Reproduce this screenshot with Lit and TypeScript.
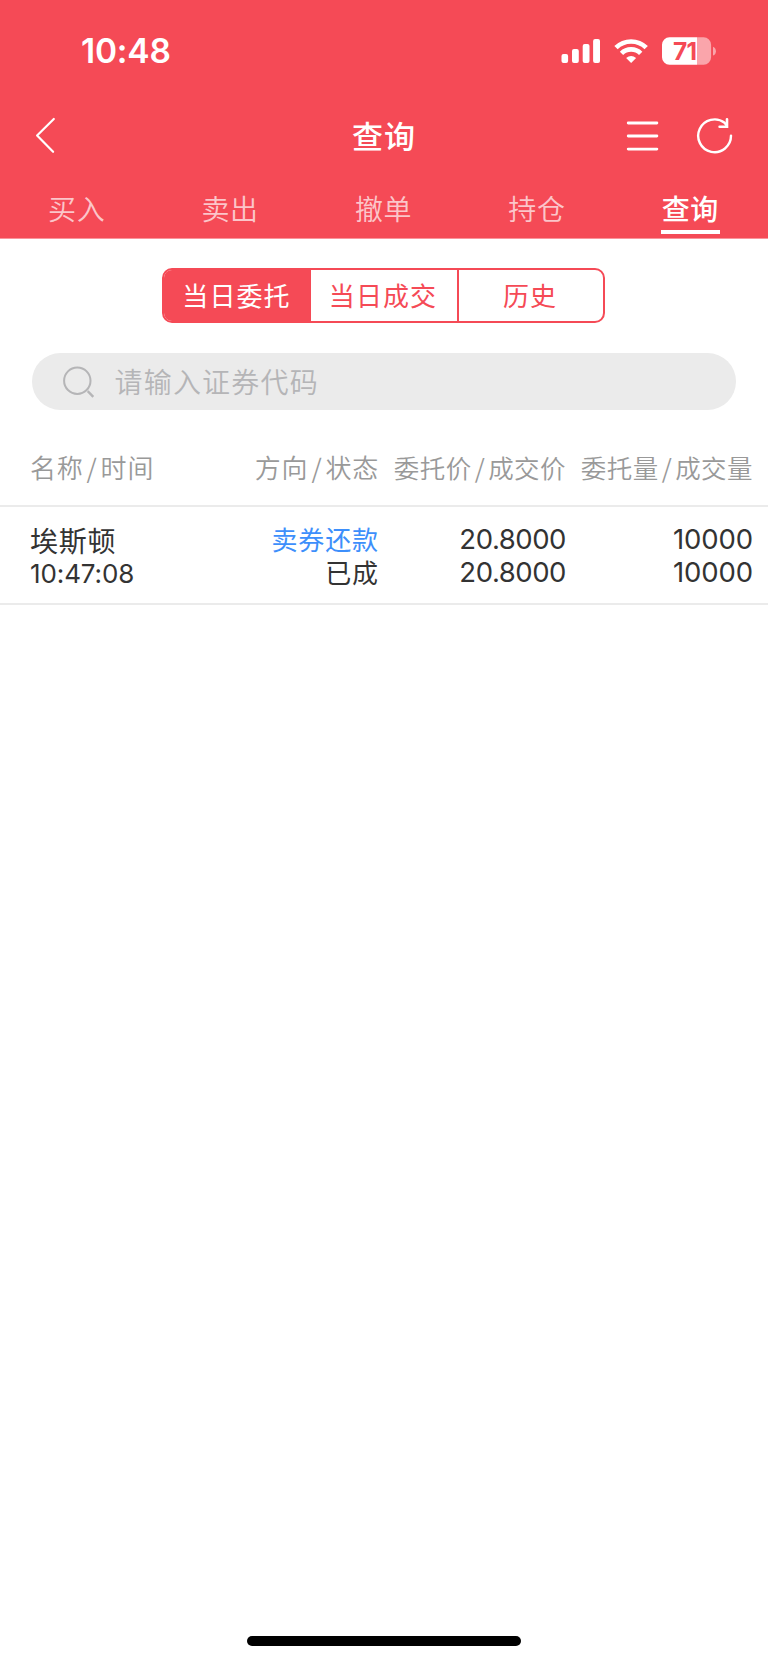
import { LitElement, html, css } from "lit";
import { customElement, property, state } from "lit/decorators.js";
import { classMap } from "lit/directives/class-map.js";

@customElement("status-bar")
class StatusBar extends LitElement {
  static styles = css`
    :host { display: flex; align-items: center; height: 102px; color: #fff; }
    .clock { font: 600 33.5px/40px Inter, sans-serif; letter-spacing: -0.2px; padding-left: 81px; flex: 1; }
    svg { display: block; width: 160px; height: 32px; margin-right: 48px; }
    .level { font: 700 24.5px Inter, sans-serif; letter-spacing: -0.8px; }
  `;
  render() {
    return html`
      <div class="clock">10:48</div>
      <svg viewBox="560 35 160 32" fill="#fff">
        <rect x="561.5" y="54" width="6.6" height="9" rx="2" />
        <rect x="572" y="49" width="6.8" height="14" rx="2" />
        <rect x="582.7" y="44" width="6.8" height="19" rx="2" />
        <rect x="593.1" y="39" width="6.9" height="24" rx="2" />
        <g fill="none" stroke="#fff" stroke-width="4.7">
          <path d="M616 47.7a21.5 21.5 0 0 1 30.2 0" />
          <path d="M621.5 53.4a13.6 13.6 0 0 1 19.2 0" />
        </g>
        <path d="M631.1 63l-5-5.1q5-4 10 0z" />
        <path d="M669.5 37.2h27.5v27.6h-27.5a7.5 7.5 0 0 1-7.5-7.5v-12.6a7.5 7.5 0 0 1 7.5-7.5z" />
        <path opacity=".5" d="M697 37.2h6.6a7.5 7.5 0 0 1 7.5 7.5v12.6a7.5 7.5 0 0 1-7.5 7.5h-6.6z" />
        <path opacity=".5" d="M713 46.8q2.9 1.3 2.9 4.4t-2.9 4.4z" />
        <text class="level" x="673" y="60" fill="#f54a56">71</text>
      </svg>
    `;
  }
}

@customElement("nav-bar")
class NavBar extends LitElement {
  @property() heading = "";
  static styles = css`
    :host { display: grid; grid-template-columns: 1fr auto 1fr; align-items: center; height: 68px; color: #fff; }
    .title { font: 500 31px/40px "Noto Sans CJK SC", sans-serif; letter-spacing: 1px; padding-bottom: 2px; }
    svg { display: block; fill: none; stroke: #fff; stroke-width: 2.8; stroke-linecap: round; stroke-linejoin: round; }
    .actions { display: flex; justify-content: flex-end; gap: 36px; padding-right: 34px; }
    .back { padding-left: 34px; }
  `;
  render() {
    return html`
      <div class="back"><svg width="24" height="38" viewBox="34 117 24 38"><path stroke-width="2.2" d="M53.8 119L37.1 135.5L53.1 151.8" /></svg></div>
      <div class="title">${this.heading}</div>
      <div class="actions">
        <svg width="34" height="38" viewBox="625 117 34 38"><path d="M628.2 123h28.7M628.2 136h28.7M628.2 149.1h28.7" /></svg>
        <svg width="39" height="38" viewBox="695 117 39 38">
          <path stroke-width="2.4" d="M731 135.6A16.4 16.4 0 1 1 724.6 122.8L726.6 125.5" />
          <path stroke-width="2.6" stroke-linejoin="miter" d="M727 119.3V126.7H719.6" />
        </svg>
      </div>
    `;
  }
}

@customElement("tab-strip")
class TabStrip extends LitElement {
  @state() private active = 4;
  static styles = css`
    :host { display: grid; grid-template-columns: repeat(5, 1fr); height: 68px; width: 767px; }
    .tab { display: flex; flex-direction: column; align-items: center; padding-top: 17px; box-sizing: border-box; color: rgba(255,255,255,.7); font: 350 28px/42px "Noto Sans CJK SC", sans-serif; letter-spacing: .6px; }
    .active { color: #fff; font-weight: 500; }
    .active::after { content: ""; width: 59px; height: 4.5px; margin-top: .7px; background: #fff; }
  `;
  render() {
    return ["买入", "卖出", "撤单", "持仓", "查询"].map(
      (t, i) => html`<div class=${classMap({ tab: true, active: i === this.active })} @click=${() => (this.active = i)}>${t}</div>`
    );
  }
}

@customElement("segment-control")
class SegmentControl extends LitElement {
  @state() private active = 0;
  static styles = css`
    :host { display: grid; grid-template-columns: 147px 146px 1fr; width: 443px; height: 55px; box-sizing: border-box; border: 2px solid #f54a56; border-radius: 10px; overflow: hidden; margin: 29px auto 0 162px; }
    .item { display: flex; align-items: center; justify-content: center; padding: 0 2px 1px 0; color: #f54a56; font: 400 26px/40px "Noto Sans CJK SC", sans-serif; letter-spacing: 1.1px; }
    .item + .item + .item { border-left: 2px solid #f54a56; }
    .active { background: #f54a56; color: #fff; }
  `;
  render() {
    return ["当日委托", "当日成交", "历史"].map(
      (t, i) => html`<div class=${classMap({ item: true, active: i === this.active })} @click=${() => (this.active = i)}>${t}</div>`
    );
  }
}

@customElement("search-box")
class SearchBox extends LitElement {
  static styles = css`
    :host { display: flex; align-items: center; gap: 18.5px; height: 57px; margin: 30px 32px 0; padding-left: 30px; box-sizing: border-box; border-radius: 29px; background: #ebebeb; color: #b5b5b7; font: 350 28px/40px "Noto Sans CJK SC", sans-serif; letter-spacing: 1.2px; }
    span { padding-bottom: 2px; }
    svg { display: block; fill: none; stroke: #b5b5b7; stroke-width: 2; }
  `;
  render() {
    return html`
      <svg width="34" height="34" viewBox="62 364 34 34"><circle cx="77.3" cy="379.7" r="13.2" /><path stroke-width="2.4" d="M87.7 390.2L93.3 395.8" /></svg>
      <span>请输入证券代码</span>
    `;
  }
}

interface Order { name: string; time: string; side: string; status: string; price: string; dealPrice: string; qty: string; dealQty: string; }

@customElement("order-table")
class OrderTable extends LitElement {
  @property({ attribute: false }) orders: Order[] = [];
  static styles = css`
    :host { display: block; color: #333; font: 400 26px/33px "Noto Sans CJK SC", sans-serif; }
    .row { display: grid; grid-template-columns: 192px 157px 187px 187px; padding-left: 30px; box-sizing: border-box; border-bottom: 2px solid #ebebeb; text-align: right; white-space: nowrap; }
    .head { height: 97px; padding-top: 40px; color: #999; font-weight: 350; letter-spacing: .8px; }
    .head > .wide { font-size: 25.5px; letter-spacing: .45px; }
    .slash { padding: 0 3px; }
    .order { height: 98px; padding-top: 15px; letter-spacing: .9px; }
    .row > :first-child { text-align: left; }
    .name { font-size: 28px; padding-top: 2px; letter-spacing: .8px; }
    .time { font: 400 26px/33px Inter, sans-serif; letter-spacing: -.1px; }
    .side { color: #3d8ffb; }
    .num { padding-top: 1px; font: 400 27.5px/33px Inter, sans-serif; letter-spacing: -.1px; }
    .price { letter-spacing: -.45px; }
  `;
  render() {
    const heads = [["名称", "时间"], ["方向", "状态"], ["委托价", "成交价"], ["委托量", "成交量"]];
    return html`
      <div class="row head">
        ${heads.map(([a, b]) => html`<div class=${classMap({ wide: a.length > 2 })}>${a}<span class="slash">/</span>${b}</div>`)}
      </div>
      ${this.orders.map((o) => html`
        <div class="row order">
          <div><div class="name">${o.name}</div><div class="time">${o.time}</div></div>
          <div><div class="side">${o.side}</div><div>${o.status}</div></div>
          <div class="num price"><div>${o.price}</div><div>${o.dealPrice}</div></div>
          <div class="num"><div>${o.qty}</div><div>${o.dealQty}</div></div>
        </div>`)}
    `;
  }
}

@customElement("app-root")
class AppRoot extends LitElement {
  static styles = css`
    :host { display: flex; flex-direction: column; width: 768px; height: 1663px; background: #fff; overflow: hidden; }
    .top { background: #f54a56; border-bottom: 1px solid #fa949b; }
    .home { width: 274px; height: 10px; border-radius: 5px; background: #000; margin: auto auto 17px 247px; }
  `;
  private orders: Order[] = [
    { name: "埃斯顿", time: "10:47:08", side: "卖券还款", status: "已成", price: "20.8000", dealPrice: "20.8000", qty: "10000", dealQty: "10000" },
  ];
  render() {
    return html`
      <div class="top">
        <status-bar></status-bar>
        <nav-bar heading="查询"></nav-bar>
        <tab-strip></tab-strip>
      </div>
      <segment-control></segment-control>
      <search-box></search-box>
      <order-table .orders=${this.orders}></order-table>
      <div class="home"></div>
    `;
  }
}
